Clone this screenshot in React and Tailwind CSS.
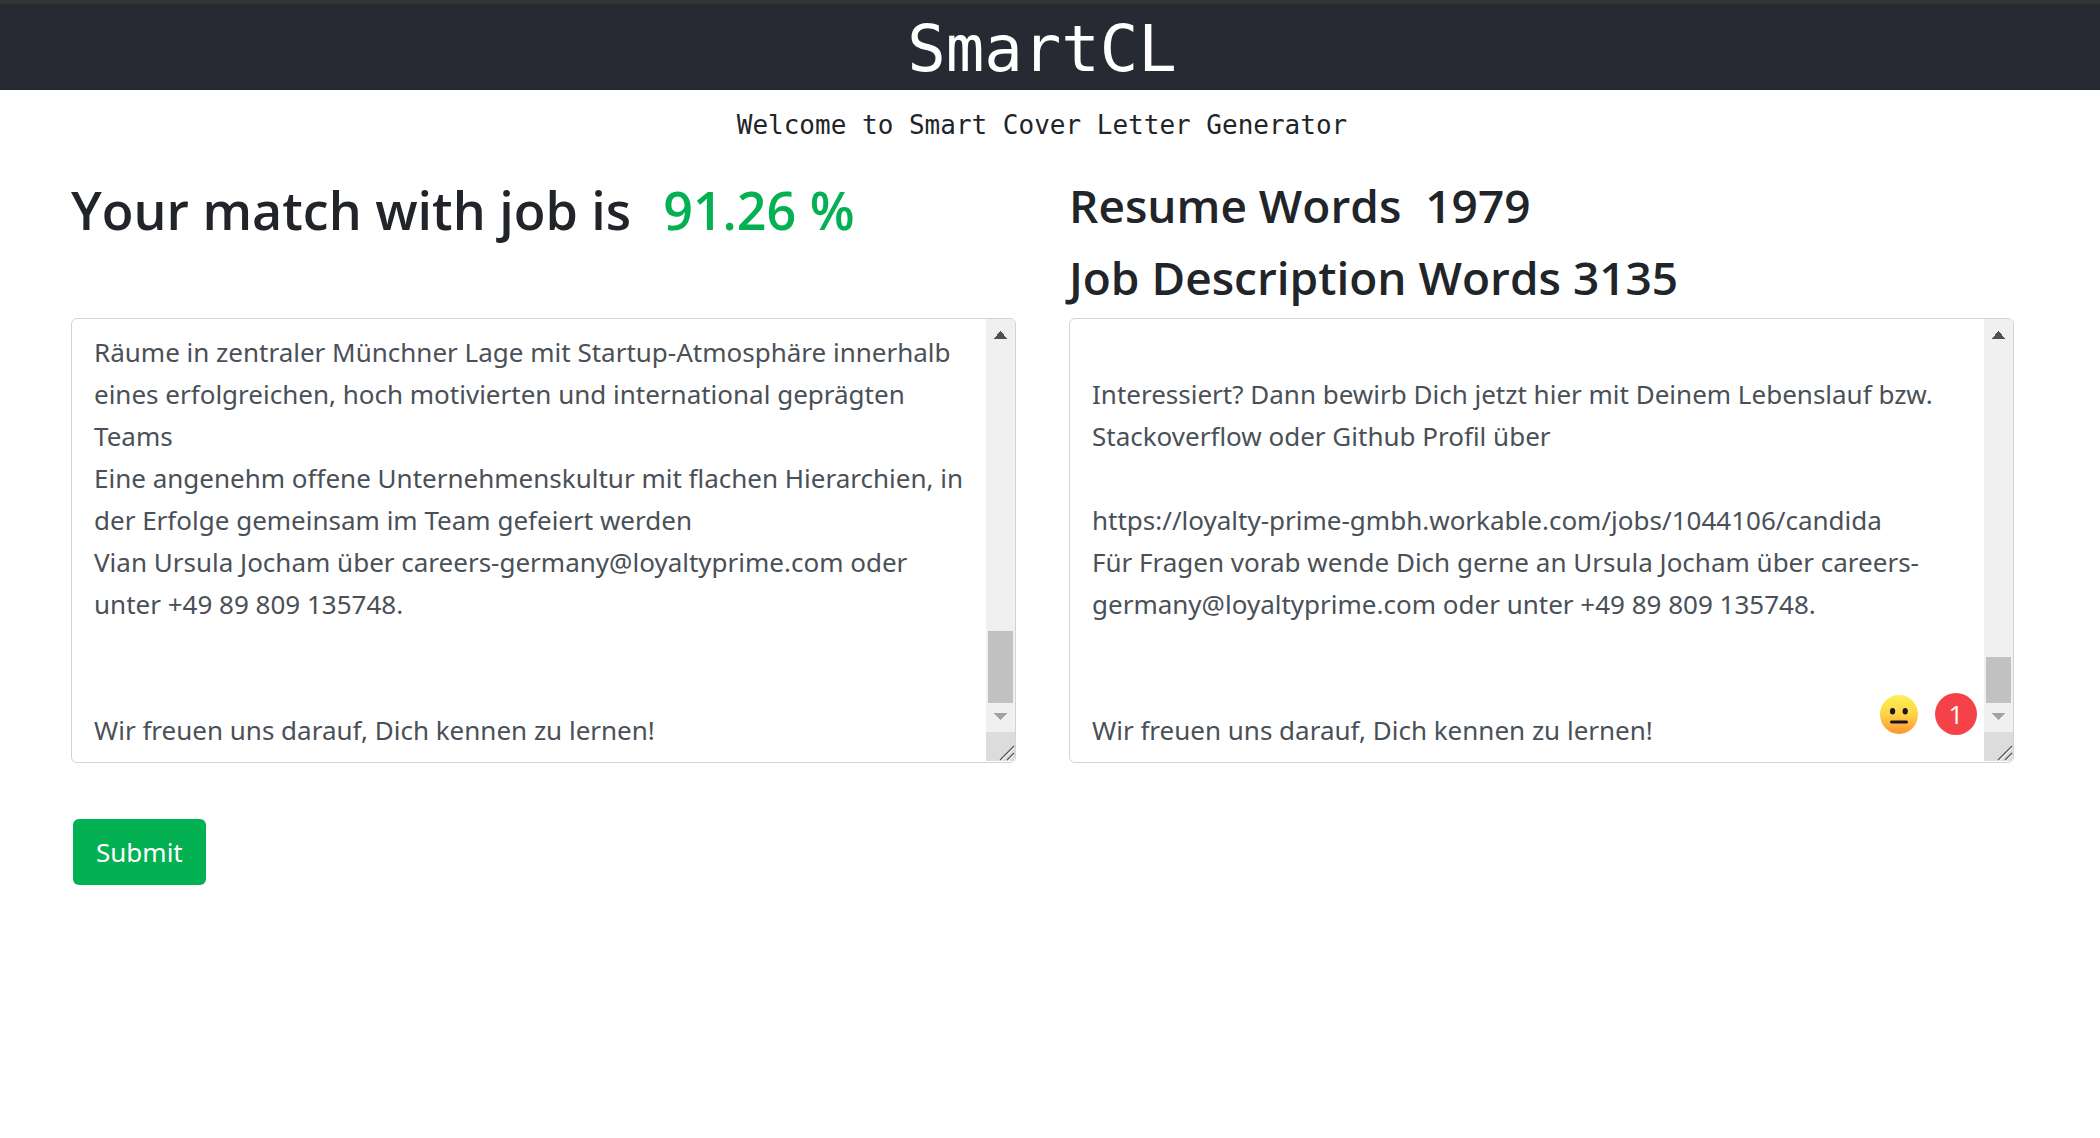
const RESUME_TEXT = `Räume in zentraler Münchner Lage mit Startup-Atmosphäre innerhalb
eines erfolgreichen, hoch motivierten und international geprägten
Teams
Eine angenehm offene Unternehmenskultur mit flachen Hierarchien, in
der Erfolge gemeinsam im Team gefeiert werden
Vian Ursula Jocham über careers-germany@loyaltyprime.com oder
unter +49 89 809 135748.


Wir freuen uns darauf, Dich kennen zu lernen!`;

const JOB_TEXT = `
Interessiert? Dann bewirb Dich jetzt hier mit Deinem Lebenslauf bzw.
Stackoverflow oder Github Profil über

https://loyalty-prime-gmbh.workable.com/jobs/1044106/candida
Für Fragen vorab wende Dich gerne an Ursula Jocham über careers-
germany@loyaltyprime.com oder unter +49 89 809 135748.


Wir freuen uns darauf, Dich kennen zu lernen!`;

function ScrollBar({ thumb }) {
  return (
    <div aria-hidden="true" className="flex w-[29px] shrink-0 flex-col bg-[#f0f0f0]">
      <svg width="29" height="29" shapeRendering="crispEdges">
        <path d="M8 19.5 L14.5 12 L21 19.5 Z" fill="#505050" />
      </svg>
      <div className="flex flex-1 flex-col justify-end px-0.5">
        <div className={`${thumb} bg-[#c1c1c1]`} />
      </div>
      <svg width="29" height="29" shapeRendering="crispEdges">
        <path d="M8 10 L14.5 17.5 L21 10 Z" fill="#a3a3a3" />
      </svg>
      <svg width="29" height="30" className="bg-white">
        <rect width="29" height="29" fill="#dcdcdc" />
        <path d="M14 28 L28 14 M21 28 L28 21" stroke="#555" strokeWidth="1.1" />
        <path d="M15 29 L28 16 M22 29 L28 23" stroke="#fff" strokeWidth="1" />
      </svg>
    </div>
  );
}

function TextBox({ label, text, thumb, children }) {
  return (
    <div className="relative flex overflow-hidden rounded-md border border-[#ced4da] bg-white">
      <textarea
        aria-label={label}
        rows={10}
        wrap="off"
        defaultValue={text}
        className="block min-w-0 flex-1 resize-none overflow-hidden pt-3 pb-[11px] pl-[22px] font-['Noto_Sans',sans-serif] text-[26px] leading-[42px] text-[#495057] outline-none"
      />
      <ScrollBar thumb={thumb} />
      {children}
    </div>
  );
}

function NeutralFace() {
  return (
    <svg width="38" height="39" viewBox="0 0 38 39" role="img" aria-label="Neutral tone">
      <defs>
        <linearGradient id="face" x1="0" y1="0" x2="0" y2="1">
          <stop offset="0" stopColor="#fdf153" />
          <stop offset="0.5" stopColor="#fdd444" />
          <stop offset="1" stopColor="#ff9230" />
        </linearGradient>
      </defs>
      <ellipse cx="19" cy="19.5" rx="19" ry="19.5" fill="url(#face)" />
      <ellipse cx="12.6" cy="16.3" rx="2.6" ry="3.3" fill="#1c1424" />
      <ellipse cx="25.2" cy="16.3" rx="2.6" ry="3.3" fill="#1c1424" />
      <rect x="10" y="25.6" width="18" height="3" rx="1.5" fill="#1c1424" />
    </svg>
  );
}

export default function App() {
  return (
    <div className="bg-white font-['Open_Sans',sans-serif] text-[#212529]">
      <header className="border-t-4 border-[#333438] bg-[#282a33] pt-1 pr-4 text-center">
        <h1 className="font-['DejaVu_Sans_Mono',monospace] text-[64px] leading-[82px] text-white">SmartCL</h1>
      </header>
      <p className="mt-3.5 pr-4 text-center font-['DejaVu_Sans_Mono',monospace] text-[26px] leading-[42px]">
        Welcome to Smart Cover Letter Generator
      </p>

      <form className="mt-[29px] pr-[86px] pl-[71px]" onSubmit={(e) => e.preventDefault()}>
        <div className="grid grid-cols-2 gap-x-[53px]">
          <h2 className="flex gap-8 text-[52px] leading-[70px] font-[550] whitespace-nowrap">
            <span>Your match with job is</span>
            <span className="text-[#03b052]">91.26 %</span>
          </h2>
          <div className="text-[46px] font-[550] whitespace-nowrap">
            <h3 className="mb-3 flex gap-6 leading-[60px]">
              <span>Resume Words</span>
              <span>1979</span>
            </h3>
            <h3 className="mb-[11px] leading-[60px]">Job Description Words 3135</h3>
          </div>
          <TextBox label="Resume" text={RESUME_TEXT} thumb="h-[72px]" />
          <TextBox label="Job description" text={JOB_TEXT} thumb="h-[46px]">
            <div className="absolute right-9 bottom-[27px] flex items-center gap-[17px]">
              <NeutralFace />
              <span className="flex size-[42px] items-center justify-center rounded-full bg-[#f54248] text-[26px] leading-none text-white">
                1
              </span>
            </div>
          </TextBox>
        </div>
        <button
          type="submit"
          className="mt-14 ml-0.5 rounded-md bg-[#03b052] px-[23px] py-3 font-['Noto_Sans',sans-serif] text-[26px] leading-[42px] text-white"
        >
          Submit
        </button>
      </form>
    </div>
  );
}
